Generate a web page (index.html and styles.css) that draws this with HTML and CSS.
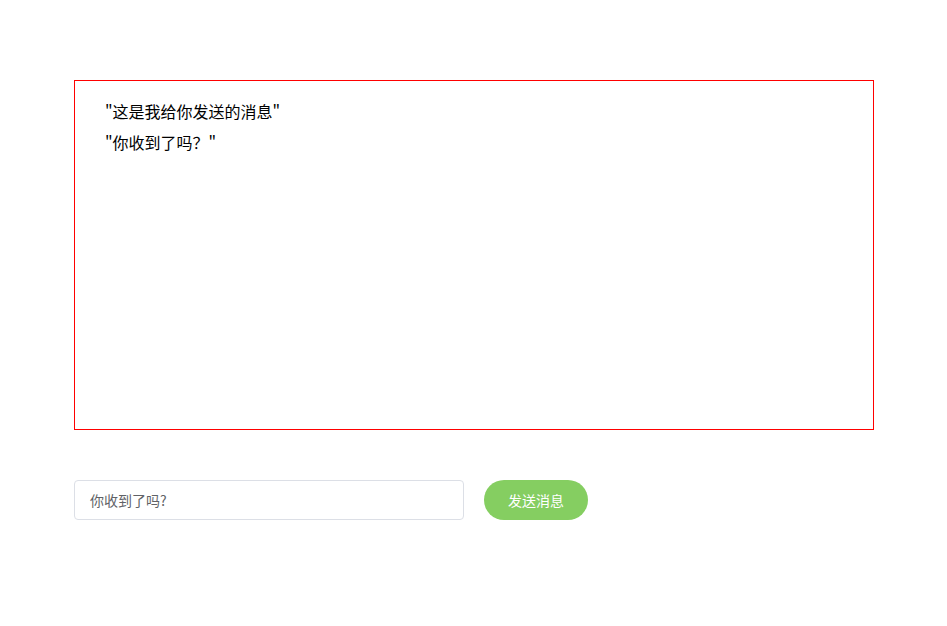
FILE: index.html
```html
<!DOCTYPE html>
<html lang="zh">
<head>
<meta charset="utf-8">
<link rel="stylesheet" href="styles.css">
</head>
<body>
<div class="page">
  <div class="board">
    <p class="msg">"这是我给你发送的消息"</p>
    <p class="msg">"你收到了吗？"</p>
  </div>
  <div class="composer">
    <div class="input">你收到了吗?</div>
    <button class="send">发送消息</button>
  </div>
</div>
</body>
</html>
```
FILE: styles.css
```css
html, body {
  margin: 0;
  padding: 0;
  background: #fff;
  font-family: "Microsoft YaHei", "Noto Sans CJK SC", "Liberation Sans", sans-serif;
}
.page {
  width: 800px;
  padding: 80px 0 0 74px;
}
.board {
  box-sizing: border-box;
  width: 800px;
  height: 350px;
  border: 1px solid #ff0000;
  padding: 15px 30px 0;
}
.msg {
  margin: 0;
  font-size: 16px;
  line-height: 31px;
  color: #000;
}
.composer {
  display: flex;
  align-items: center;
  gap: 20px;
  margin-top: 50px;
}
.input {
  box-sizing: border-box;
  width: 390px;
  height: 40px;
  border: 1px solid #dcdfe6;
  border-radius: 4px;
  padding: 0 15px;
  font-size: 14px;
  line-height: 38px;
  color: #606266;
}
.send {
  box-sizing: border-box;
  width: 104px;
  height: 40px;
  border: none;
  border-radius: 20px;
  background: #85ce61;
  color: #fff;
  font-family: inherit;
  font-size: 14px;
  padding: 0;
}
```
